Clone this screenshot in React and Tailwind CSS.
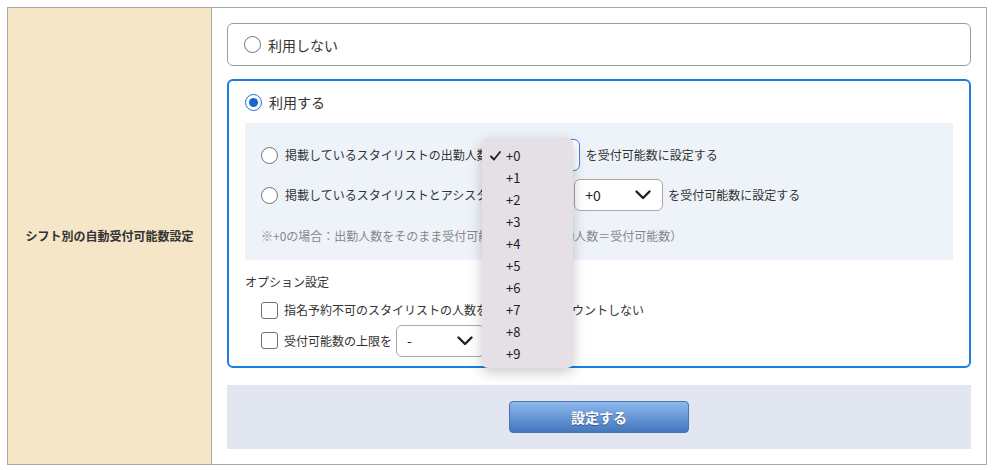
import React from "react";

const FONT = { fontFamily: '"Noto Sans CJK JP", "Noto Sans", sans-serif' };

function Chevron() {
  return (
    <svg width="16" height="10" viewBox="0 0 16 10" fill="none">
      <path d="M1.5 1.5 L8 8 L14.5 1.5" stroke="#222" strokeWidth="2.4" strokeLinecap="round" strokeLinejoin="round" />
    </svg>
  );
}

function Radio({ checked }) {
  return checked ? (
    <span className="w-[17px] h-[17px] rounded-full border-[1.5px] border-[#1a73d9] bg-white flex items-center justify-center shrink-0">
      <span className="w-[9px] h-[9px] rounded-full bg-[#1666d0]" />
    </span>
  ) : (
    <span className="w-[17px] h-[17px] rounded-full border border-[#6f6f6f] bg-white shrink-0" />
  );
}

function Check() {
  return <span className="w-[17px] h-[17px] rounded-[3px] border border-[#6f6f6f] bg-white shrink-0" />;
}

function Select({ value, focused }) {
  return (
    <div
      className={
        "w-[89px] h-[32px] rounded-[6px] bg-white flex items-center justify-between pl-[10px] pr-[11px] text-[14px] text-[#222] shrink-0 " +
        (focused ? "border border-[#3b82f6]" : "border border-[#a8a8a8]")
      }
    >
      <span>{value}</span>
      <Chevron />
    </div>
  );
}

export default function App() {
  const items = ["+0", "+1", "+2", "+3", "+4", "+5", "+6", "+7", "+8", "+9"];
  return (
    <div className="relative w-[993px] h-[470px] bg-white pt-[7px] pl-[7px] text-[#333]" style={FONT}>
      <div className="w-[980px] h-[458px] border border-[#aaaaaa] flex">
        <div className="w-[204px] border-r border-[#aaaaaa] bg-[#f4e6c7] flex items-center justify-center">
          <span className="text-[12px] font-bold text-[#333]">シフト別の自動受付可能数設定</span>
        </div>
        <div className="flex-1 p-[15px] flex flex-col">
          <div className="h-[43px] rounded-[6px] border border-[#9c9c9c] flex items-center pl-[16px] gap-[7px]">
            <Radio />
            <span className="text-[14px] leading-[20px]">利用しない</span>
          </div>

          <div className="mt-[13px] h-[289px] rounded-[6px] border-2 border-[#1b7fe0] px-[16px] pt-[11px] pb-[10px] flex flex-col">
            <div className="h-[20px] flex items-center gap-[7px]">
              <Radio checked />
              <span className="text-[14px] leading-[20px]">利用する</span>
            </div>

            <div className="mt-[11px] h-[137px] bg-[#eef3fa] pl-[16px] pt-[16px] pb-[15px] flex flex-col text-[12px]">
              <div className="h-[32px] flex items-center">
                <Radio />
                <span className="ml-[7px] leading-[18px]">掲載しているスタイリストの出勤人数</span>
                <span className="ml-[2px]"><Select value="+0" focused /></span>
                <span className="ml-[6px] leading-[18px]">を受付可能数に設定する</span>
              </div>
              <div className="mt-[8px] h-[32px] flex items-center">
                <Radio />
                <span className="ml-[7px] leading-[18px]">掲載しているスタイリストとアシスタントの出勤人数</span>
                <span className="ml-[2px]"><Select value="+0" /></span>
                <span className="ml-[5px] leading-[18px]">を受付可能数に設定する</span>
              </div>
              <div className="mt-[16px] h-[18px] leading-[18px] text-[#888]">
                ※+0の場合：出勤人数をそのまま受付可能数に設定（出勤人数＝受付可能数）
              </div>
            </div>

            <div className="mt-[13px] h-[18px] leading-[18px] text-[12px]">オプション設定</div>
            <div className="mt-[9px] h-[20px] pl-[16px] flex items-center text-[12px]">
              <Check />
              <span className="ml-[6px] leading-[18px]">指名予約不可のスタイリストの人数を受付可能数にカウントしない</span>
            </div>
            <div className="mt-[5px] h-[31px] pl-[16px] flex items-center text-[12px]">
              <Check />
              <span className="ml-[6px] leading-[18px]">受付可能数の上限を</span>
              <span className="ml-[4px]"><Select value="-" /></span>
            </div>
          </div>

          <div className="mt-[17px] h-[64px] bg-[#e2e6f0] flex items-center justify-center">
            <button className="w-[180px] h-[32px] rounded-[4px] border border-[#4a74b3] bg-gradient-to-b from-[#8db8ee] to-[#4677be] text-white text-[14px] font-bold [text-shadow:0_1px_1px_rgba(0,0,0,0.35)]">
              設定する
            </button>
          </div>
        </div>
      </div>

      <div className="absolute left-[482px] top-[138px] w-[91px] h-[230px] rounded-[6px] bg-[#e4e0e5] shadow-[0_4px_14px_rgba(0,0,0,0.22)] pt-[7px] text-[13px] text-[#1e1e1e]">
        {items.map((it, i) => (
          <div key={it} className="h-[22px] flex items-center">
            <span className="w-[24px] flex justify-end pr-[5px]">
              {i === 0 && (
                <svg width="11" height="10" viewBox="0 0 11 10" fill="none">
                  <path d="M1 5.5 L4 8.5 L10 1" stroke="#1e1e1e" strokeWidth="1.8" strokeLinecap="round" strokeLinejoin="round" />
                </svg>
              )}
            </span>
            <span>{it}</span>
          </div>
        ))}
      </div>
    </div>
  );
}
